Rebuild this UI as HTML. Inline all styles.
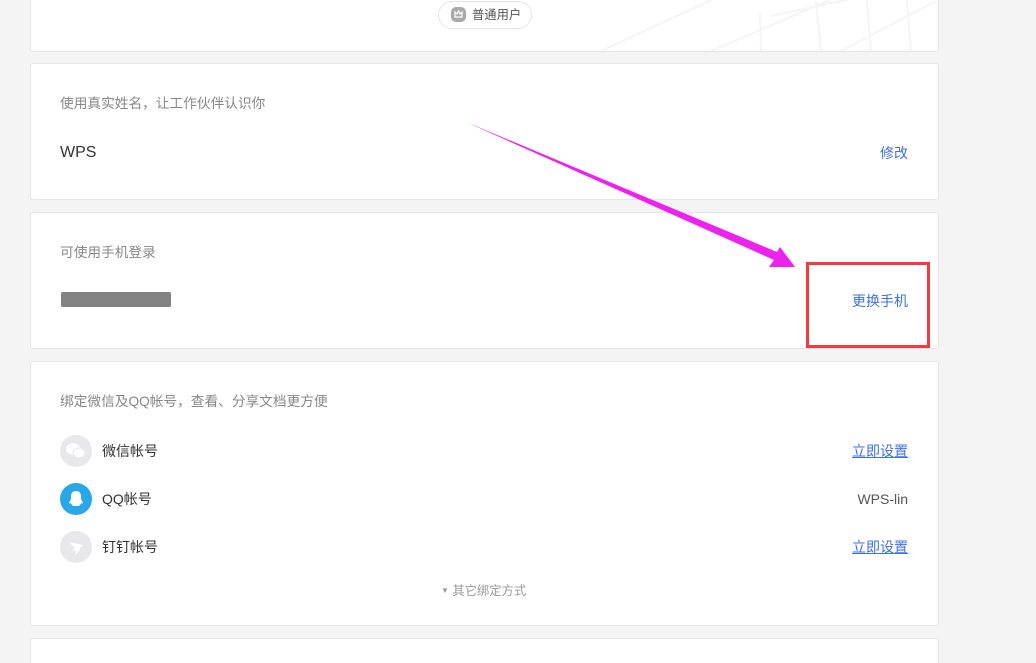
<!DOCTYPE html>
<html><head><meta charset="utf-8">
<style>
html,body{margin:0;width:1036px;height:663px;overflow:hidden}
body{background:#f4f4f4;position:relative;font-family:"Liberation Sans","Noto Sans CJK SC",sans-serif;color:#333}
.card{position:absolute;left:30px;width:907px;background:#fff;border:1px solid #e6e6e6;border-radius:3px}
.t{position:absolute;font-size:14px;line-height:20px;white-space:nowrap}
.g{color:#888;font-size:13.7px}
.b{color:#3d6fe6}
.r{right:30px}
.ic{position:absolute;left:60px;width:32px;height:32px;border-radius:50%;background:#e8e8ea}
</style></head><body>
<div class="card" style="top:-10px;height:60px;overflow:hidden">
<svg width="907" height="60" style="position:absolute;left:0;top:0">
<g stroke="#f5f5f5" stroke-width="2" fill="none">
<line x1="570" y1="60" x2="700" y2="0"/><line x1="680" y1="60" x2="820" y2="0"/>
<line x1="730" y1="60" x2="729" y2="20"/><line x1="740" y1="25" x2="880" y2="-5"/>
<line x1="790" y1="60" x2="785" y2="10"/><line x1="810" y1="60" x2="905" y2="10"/>
<line x1="840" y1="60" x2="835" y2="0"/><line x1="880" y1="60" x2="875" y2="0"/>
</g></svg>
<div style="position:absolute;left:407px;top:10px;width:92px;height:26px;border:1px solid #e4e4e4;border-radius:14px;background:#fff"></div>
<div style="position:absolute;left:420px;top:16px;width:15px;height:15px;border-radius:5px;background:#a9a9a9"></div>
<svg width="15" height="15" style="position:absolute;left:420px;top:16px"><path d="M4 10l0-5 2 2 1.5-3 1.5 3 2-2v5z" fill="none" stroke="#fff" stroke-width="1.2"/></svg>
<div class="t" style="left:441px;top:14px;color:#555;font-size:12.3px">普通用户</div>
</div>

<div class="card" style="top:63px;height:135px">
<div class="t g" style="left:29px;top:30px">使用真实姓名，让工作伙伴认识你</div>
<div class="t" style="left:29px;top:79px;font-size:16px">WPS</div>
<div class="t b r" style="top:79px">修改</div>
</div>

<div class="card" style="top:212px;height:135px">
<div class="t g" style="left:29px;top:30px">可使用手机登录</div>
<div style="position:absolute;left:30px;top:79px;width:110px;height:15px;background:#828282;border-radius:2px"></div>
<div class="t b r" style="top:78px">更换手机</div>
</div>

<div class="card" style="top:361px;height:263px">
<div class="t g" style="left:29px;top:30px">绑定微信及QQ帐号，查看、分享文档更方便</div>
<div class="t" style="left:71px;top:79px">微信帐号</div>
<div class="t b r" style="top:79px;text-decoration:underline">立即设置</div>
<div class="t" style="left:71px;top:127px">QQ帐号</div>
<div class="t r" style="top:127px;color:#555">WPS-lin</div>
<div class="t" style="left:71px;top:175px">钉钉帐号</div>
<div class="t b r" style="top:175px;text-decoration:underline">立即设置</div>
<div class="t" style="left:410px;top:219px;font-size:12.3px;color:#999"><span style="font-size:8px;vertical-align:2px">▼</span> 其它绑定方式</div>
</div>

<div class="ic" style="top:435px"><svg width="32" height="32"><ellipse cx="13" cy="14" rx="7" ry="6" fill="#fff"/><ellipse cx="19" cy="18" rx="6" ry="5" fill="#fff" stroke="#e8e8ea"/></svg></div>
<div class="ic" style="top:483px;background:#28a8e6"><svg width="32" height="32"><path d="M16 8c-3 0-5 2-5 5v3l-2 4c1 1 2 0 2 0 0 1 1 2 2 3h6c1-1 2-2 2-3 0 0 1 1 2 0l-2-4v-3c0-3-2-5-5-5z" fill="#fff"/></svg></div>
<div class="ic" style="top:531px"><svg width="32" height="32"><path d="M9 11l14 3-4 4 1 1-5 5 1-4-4-1 3-2z" fill="#fff"/></svg></div>

<div class="card" style="top:638px;height:40px"></div>

<svg width="1036" height="663" style="position:absolute;left:0;top:0">
<polygon points="466,122 774,260 769,267 795,267 780,247 777,252" fill="#ee22ee"/>
</svg>
<div style="position:absolute;left:806px;top:262px;width:118px;height:80px;border:3px solid #f43a3a"></div>
</body></html>
